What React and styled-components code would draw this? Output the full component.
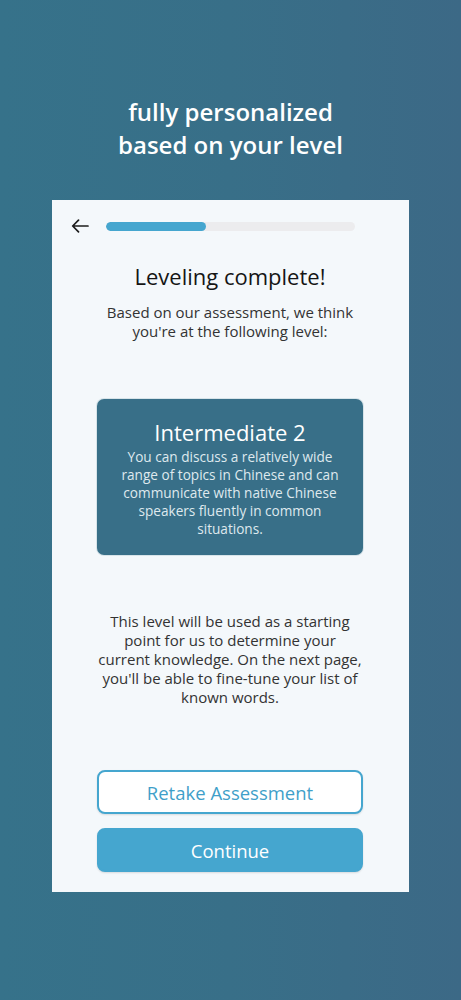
import React from "react";
import styled, { createGlobalStyle } from "styled-components";

const Global = createGlobalStyle`
  html, body { margin: 0; padding: 0; }
  body {
    font-family: "Open Sans", "Liberation Sans", sans-serif;
    background: #386f88;
  }
`;

export default function App() {
  const progress = 40;
  return (
    <Page>
      <Global />
      <Headline>
        fully personalized
        <br />
        based on your level
      </Headline>
      <Panel>
        <TopBar>
          <BackButton aria-label="Back">
            <svg width="18" height="14" viewBox="0 0 18 14" fill="none">
              <path
                d="M17 7H2M7.5 1.2L1.7 7l5.8 5.8"
                stroke="#1c1c1c"
                strokeWidth="1.7"
                strokeLinecap="round"
                strokeLinejoin="round"
              />
            </svg>
          </BackButton>
          <Track>
            <Fill style={{ width: `${progress}%` }} />
          </Track>
        </TopBar>
        <Title>Leveling complete!</Title>
        <Lead>
          Based on our assessment, we think
          <br />
          you're at the following level:
        </Lead>
        <LevelCard>
          <LevelName>Intermediate 2</LevelName>
          <LevelText>
            You can discuss a relatively wide
            <br />
            range of topics in Chinese and can
            <br />
            communicate with native Chinese
            <br />
            speakers fluently in common
            <br />
            situations.
          </LevelText>
        </LevelCard>
        <Note>
          This level will be used as a starting
          <br />
          point for us to determine your
          <br />
          current knowledge. On the next page,
          <br />
          you'll be able to fine-tune your list of
          <br />
          known words.
        </Note>
        <Actions>
          <Button>Retake Assessment</Button>
          <Button primary>Continue</Button>
        </Actions>
      </Panel>
    </Page>
  );
}

const Page = styled.div`
  width: 461px;
  height: 1000px;
  background: linear-gradient(90deg, #36728a 0%, #386f88 50%, #3c6986 100%);
  display: flex;
  flex-direction: column;
  align-items: center;
  overflow: hidden;
`;

const Headline = styled.h1`
  margin: 95px 0 0;
  color: #ffffff;
  font-size: 24px;
  font-weight: 600;
  line-height: 33px;
  text-align: center;
  white-space: nowrap;
`;

const Panel = styled.div`
  margin-top: 39px;
  width: 357px;
  height: 692px;
  box-sizing: border-box;
  background: #f4f8fb;
  display: flex;
  flex-direction: column;
  align-items: center;
  padding: 0 46px 0 45px;
`;

const TopBar = styled.div`
  align-self: stretch;
  display: flex;
  align-items: center;
  gap: 17px;
  margin: 19px 8px 0 -26px;
  height: 14px;
`;

const BackButton = styled.button`
  border: none;
  background: transparent;
  padding: 0;
  display: flex;
`;

const Track = styled.div`
  flex: 1;
  height: 9px;
  border-radius: 5px;
  background: #ececee;
  overflow: hidden;
`;

const Fill = styled.div`
  height: 100%;
  border-radius: 5px;
  background: #45a6cf;
`;

const Title = styled.h2`
  margin: 29px 0 0;
  font-size: 22px;
  font-weight: 400;
  line-height: 28px;
  color: #151515;
  text-align: center;
  white-space: nowrap;
`;

const Lead = styled.p`
  margin: 13px 0 0;
  font-size: 15px;
  line-height: 19px;
  color: #333;
  text-align: center;
  white-space: nowrap;
`;

const LevelCard = styled.div`
  margin-top: 58px;
  width: 266px;
  height: 156px;
  box-sizing: border-box;
  background: #386f88;
  border-radius: 7px;
  padding: 19px 0 0;
  text-align: center;
  color: #fff;
  box-shadow: 0 0 0 1px rgba(56, 111, 136, 0.15);
`;

const LevelName = styled.div`
  font-size: 22px;
  font-weight: 400;
  line-height: 28px;
`;

const LevelText = styled.div`
  margin-top: 2px;
  font-size: 13.6px;
  line-height: 18px;
  color: #dfe9ee;
  white-space: nowrap;
`;

const Note = styled.p`
  margin: 57px 0 0;
  font-size: 15px;
  line-height: 19px;
  color: #333;
  text-align: center;
  white-space: nowrap;
`;

const Actions = styled.div`
  margin-top: 63px;
  align-self: stretch;
  display: flex;
  flex-direction: column;
  gap: 14px;
`;

const Button = styled.button`
  height: 44px;
  border-radius: 8px;
  font-family: "Open Sans", "Liberation Sans", sans-serif;
  font-size: 18.5px;
  border: 2px solid #45a6cf;
  background: ${(p) => (p.primary ? "#45a6cf" : "#ffffff")};
  color: ${(p) => (p.primary ? "#ffffff" : "#3f9fc9")};
  box-shadow: 0 1px 2px rgba(0, 0, 0, 0.12);
`;
